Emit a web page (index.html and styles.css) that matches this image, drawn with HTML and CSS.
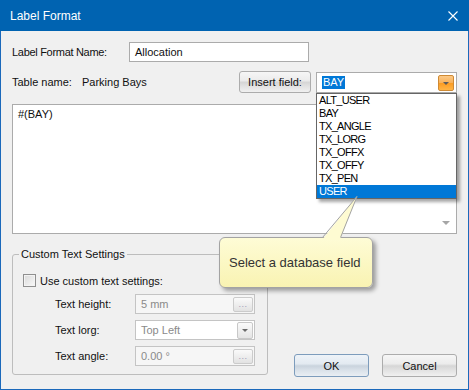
FILE: index.html
```html
<!DOCTYPE html>
<html lang="en">
<head>
    <meta charset="utf-8">
    <title>Label Format</title>
    <link rel="stylesheet" href="styles.css">
</head>
<body>

<div class="lf-window">
    <div class="lf-titlebar">
        <span class="lf-title">Label Format</span>
        <svg class="lf-close" width="10" height="10" viewBox="0 0 10 10"><path d="M0.5 0.5 L9.5 9.5 M9.5 0.5 L0.5 9.5" stroke="#fff" stroke-width="1.1" fill="none"/></svg>
    </div>

    <div class="lf-content">
        <div class="lf-row lf-row-name">
            <span class="lf-label lf-label-name">Label Format Name:</span>
            <div class="lf-input lf-input-name">Allocation</div>
        </div>

        <div class="lf-row lf-row-table">
            <span class="lf-label lf-label-table">Table name:</span>
            <span class="lf-table-value">Parking Bays</span>
            <button class="lf-btn lf-btn-insert">Insert field:</button>
            <div class="lf-combo lf-combo-field">
                <span class="lf-selected">BAY</span>
                <span class="lf-drop lf-drop-hot"><span class="lf-arrow"></span></span>
            </div>
        </div>

        <div class="lf-editor">
            #(BAY)
            <span class="lf-scroll-down"></span>
        </div>

        <div class="lf-bottom">
            <fieldset class="lf-group">
                <legend>Custom Text Settings</legend>
                <div class="lf-check-row">
                    <span class="lf-checkbox"></span>
                    <span>Use custom text settings:</span>
                </div>
                <div class="lf-field-row">
                    <span class="lf-field-label">Text height:</span>
                    <div class="lf-input lf-input-off">5 mm<span class="lf-dots">...</span></div>
                </div>
                <div class="lf-field-row">
                    <span class="lf-field-label">Text lorg:</span>
                    <div class="lf-input lf-input-off lf-input-combo">Top Left<span class="lf-drop lf-drop-off"><span class="lf-arrow"></span></span></div>
                </div>
                <div class="lf-field-row">
                    <span class="lf-field-label">Text angle:</span>
                    <div class="lf-input lf-input-off">0.00 &deg;<span class="lf-dots">...</span></div>
                </div>
            </fieldset>

            <div class="lf-buttons">
                <button class="lf-btn lf-btn-dlg lf-btn-default">OK</button>
                <button class="lf-btn lf-btn-dlg">Cancel</button>
            </div>
        </div>
    </div>

    <!-- open drop down of the insert field combo -->
    <ul class="lf-field-list">
        <li>ALT_USER</li>
        <li>BAY</li>
        <li>TX_ANGLE</li>
        <li>TX_LORG</li>
        <li>TX_OFFX</li>
        <li>TX_OFFY</li>
        <li>TX_PEN</li>
        <li class="lf-on">USER</li>
    </ul>

    <!-- balloon tip -->
    <div class="lf-tip">Select a database field</div>
    <svg class="lf-tip-pointer" width="40" height="46" viewBox="0 0 40 46">
        <path d="M2 46 L37 2 L20 46 Z" fill="#fefbd2"/>
        <path d="M2.5 43.5 L37 2.5 L20.5 43.5" fill="none" stroke="#a3a3a3" stroke-width="1"/>
    </svg>
</div>

</body>
</html>
```

FILE: styles.css
```css
body {
    margin:0;
    font-family:"Liberation Sans",Arial,sans-serif;
    font-size:11px;
    color:#111;
}

/* dialog frame */
.lf-window {
    position:relative;
    width:469px;
    height:390px;
    box-sizing:border-box;
    border:1px solid #1b69bb;
    border-top:0;
    background:#f0f0f0;
}

.lf-titlebar {
    height:31px;
    margin:0 -1px;
    padding:0 11px 0 10px;
    display:flex;
    align-items:center;
    background:#0063b1;
    color:#fff;
    font-size:12px;
}

.lf-title {
    flex:1;
}

.lf-content {
    padding:11px 11px 0;
}

.lf-row {
    display:flex;
    align-items:center;
}

.lf-row-name {
    height:20px;
}

.lf-label-name {
    width:117px;
    letter-spacing:-0.3px;
}

.lf-input {
    box-sizing:border-box;
    height:20px;
    border:1px solid #ababab;
    background:#fff;
    padding:0 1px 0 5px;
    display:flex;
    align-items:center;
}

.lf-input-name {
    width:180px;
}

.lf-row-table {
    margin-top:9px;
    height:22px;
}

.lf-label-table {
    width:70px;
}

.lf-table-value {
    flex:1;
}

/* buttons */
.lf-btn {
    box-sizing:border-box;
    height:22px;
    padding:0;
    border:1px solid #acacac;
    border-radius:3px;
    background:linear-gradient(#f6f6f6 0%, #ececec 42%, #d6d6d6 52%, #e2e2e2 72%, #f0f0f0 100%);
    font:inherit;
    color:#111;
}

.lf-btn-insert {
    width:72px;
    margin-right:5px;
}

.lf-btn-dlg {
    width:75px;
    height:23px;
}

.lf-btn-default {
    border-color:#7d9cbc;
    background:linear-gradient(#eef3f8 0%, #e3eaf1 42%, #c9d3dd 52%, #d9e1e9 72%, #e9eef3 100%);
}

/* combo boxes */
.lf-combo {
    box-sizing:border-box;
    width:141px;
    height:21px;
    margin-top:1px;
    align-self:flex-start;
    border:1px solid #ababab;
    background:#fff;
    padding:0 2px 0 5px;
    display:flex;
    align-items:center;
}

.lf-selected {
    background:#0078d7;
    color:#fff;
    line-height:13px;
    padding:0 1px;
}

.lf-drop {
    margin-left:auto;
    box-sizing:border-box;
    width:16px;
    height:16px;
    border-radius:2px;
    display:flex;
    align-items:center;
    justify-content:center;
}

.lf-drop-hot {
    border:1px solid #cf8a34;
    background:linear-gradient(#fcc987 0%, #f8b25a 48%, #fb9c22 52%, #ffb546 100%);
}

.lf-drop-off {
    height:17px;
    border:1px solid #c8c8c8;
    background:linear-gradient(#fbfbfb, #e4e4e4);
}

.lf-arrow {
    width:0;
    height:0;
    border-left:3px solid transparent;
    border-right:3px solid transparent;
    border-top:3px solid #5c5c5c;
    margin-top:1px;
}

.lf-drop-off .lf-arrow {
    border-top-color:#6a6a6a;
}

/* text editor */
.lf-editor {
    position:relative;
    box-sizing:border-box;
    height:130px;
    margin-top:11px;
    padding:3px 5px;
    line-height:13px;
    border:1px solid #ababab;
    background:#fff;
}

.lf-scroll-down {
    position:absolute;
    right:6px;
    bottom:8px;
    width:0;
    height:0;
    border-left:4px solid transparent;
    border-right:4px solid transparent;
    border-top:4px solid #a6a6a6;
}

/* custom text settings */
.lf-bottom {
    display:flex;
    align-items:flex-end;
}

.lf-group {
    box-sizing:border-box;
    width:256px;
    min-width:0;
    margin:14px 0 0;
    padding:0 0 8px;
    border:1px solid #bdbdbd;
    border-radius:3px;
}

.lf-group legend {
    margin-left:6px;
    padding:0 2px;
    line-height:13px;
}

.lf-check-row {
    display:flex;
    align-items:center;
    gap:4px;
    height:13px;
    margin:13px 0 0 10px;
}

.lf-checkbox {
    box-sizing:border-box;
    width:13px;
    height:13px;
    border:1px solid #8f8f8f;
    background:linear-gradient(135deg, #d9d9d9, #f9f9f9);
    box-shadow:inset 0 0 0 1px #f3f3f3;
}

.lf-field-row {
    display:flex;
    align-items:center;
    margin:6px 0 0 42px;
}

.lf-check-row + .lf-field-row {
    margin-top:7px;
}

.lf-field-label {
    width:80px;
}

.lf-input-off {
    width:120px;
    color:#8a8a8a;
    background:#f6f6f6;
    border-color:#c4c4c4;
}

.lf-input-combo {
    background:#fff;
}

.lf-dots {
    margin-left:auto;
    box-sizing:border-box;
    width:20px;
    height:15px;
    border:1px solid #cbcbcb;
    border-radius:2px;
    background:linear-gradient(#fafafa, #e2e2e2);
    color:#9d9db8;
    font-size:9px;
    line-height:13px;
    text-align:center;
    letter-spacing:0.5px;
}

.lf-buttons {
    display:flex;
    gap:13px;
    margin-left:auto;
    margin-bottom:-2px;
}

/* dropped list */
.lf-field-list {
    position:absolute;
    left:315px;
    top:93px;
    width:141px;
    box-sizing:border-box;
    margin:0;
    padding:0;
    list-style:none;
    border:1px solid #666;
    background:#fff;
    box-shadow:3px 3px 3px rgba(0,0,0,.35);
    color:#000;
    letter-spacing:-0.7px;
}

.lf-field-list li {
    height:13px;
    line-height:13px;
    padding-left:2px;
}

.lf-field-list .lf-on {
    background:#0078d7;
    color:#fff;
}

/* balloon */
.lf-tip {
    position:absolute;
    left:218px;
    top:237px;
    width:154px;
    height:51px;
    box-sizing:border-box;
    padding:0 0 1px 9px;
    display:flex;
    align-items:center;
    border:1px solid #a3a3a3;
    border-radius:6px;
    background:linear-gradient(#fefcd6, #f9f3b2);
    box-shadow:3px 3px 4px rgba(0,0,0,.35);
    color:#333;
    font-size:13px;
}

.lf-tip-pointer {
    position:absolute;
    left:319px;
    top:194px;
}
```
